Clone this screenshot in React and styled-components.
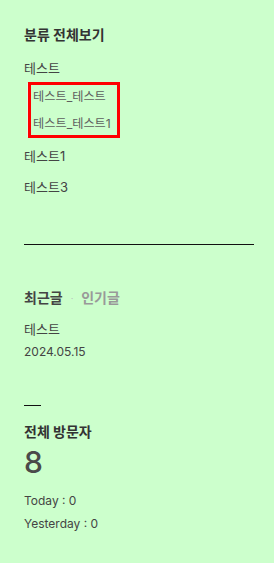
import React from "react";
import styled, { createGlobalStyle } from "styled-components";

const GlobalStyle = createGlobalStyle`
  html, body {
    margin: 0;
    padding: 0;
    background: #ccffcc;
  }
  body {
    font-family: Inter, "Noto Sans CJK KR", sans-serif;
    color: #333;
  }
  ul {
    margin: 0;
    padding: 0;
    list-style: none;
  }
`;

const Sidebar = styled.aside`
  padding: 25px 20px 30px 24px;
`;

const Heading = styled.h3`
  margin: 0;
  font-size: 14px;
  font-weight: 700;
  line-height: 20px;
  color: #333;
`;

const CategoryList = styled.ul`
  margin-top: 13px !important;
`;

const Item = styled.li`
  font-size: 13px;
  line-height: 20px;
  color: #444;
  margin-top: ${(p) => p.$gap || 0}px;
`;

const SubBox = styled.ul`
  width: 84px;
  margin: 4px 0 8px 4px !important;
  padding: 2px 0 1px 2px !important;
  border: 3px solid #ff0000;
  box-shadow: -2px 0 0 -1px #e6f5e6;
`;

const SubItem = styled.li`
  font-size: 12.2px;
  line-height: 20px;
  color: #5e5e5e;
  white-space: nowrap;
  & + & {
    margin-top: 7px;
  }
`;

const Divider = styled.hr`
  margin: ${(p) => p.$top}px 0 0;
  border: none;
  height: 1px;
  width: ${(p) => p.$width || "100%"};
  background: #111;
`;

const Tabs = styled.div`
  display: flex;
  align-items: center;
  margin-top: 43px;
  gap: 8px;
`;

const Tab = styled.span`
  font-size: 14px;
  font-weight: 700;
  line-height: 20px;
  color: ${(p) => (p.$active ? "#444" : "#999")};
`;

const Dot = styled.span`
  font-size: 9px;
  color: #bbb;
`;

const PostTitle = styled.div`
  margin-top: 11px;
  font-size: 13px;
  line-height: 20px;
  color: #444;
`;

const PostDate = styled.div`
  margin-top: 4px;
  font-size: 12px;
  line-height: 18px;
  color: #444;
`;

const VisitorHeading = styled(Heading)`
  margin-top: 16px;
`;

const Total = styled.div`
  margin-top: 2px;
  font-size: 30px;
  font-weight: 500;
  line-height: 36px;
  color: #4a4a4a;
`;

const Count = styled.div`
  margin-top: ${(p) => p.$gap}px;
  font-size: 12px;
  line-height: 20px;
  color: #444;
`;

export default function App() {
  return (
    <>
      <GlobalStyle />
      <Sidebar>
        <Heading>분류 전체보기</Heading>
        <CategoryList>
          <Item>
            테스트
            <SubBox>
              <SubItem>테스트_테스트</SubItem>
              <SubItem>테스트_테스트1</SubItem>
            </SubBox>
          </Item>
          <Item>테스트1</Item>
          <Item $gap={11}>테스트3</Item>
        </CategoryList>

        <Divider $top={47} />

        <Tabs>
          <Tab $active>최근글</Tab>
          <Dot>·</Dot>
          <Tab>인기글</Tab>
        </Tabs>
        <PostTitle>테스트</PostTitle>
        <PostDate>2024.05.15</PostDate>

        <Divider $top={44} $width="17px" />

        <VisitorHeading>전체 방문자</VisitorHeading>
        <Total>8</Total>
        <Count $gap={11}>Today : 0</Count>
        <Count $gap={3}>Yesterday : 0</Count>
      </Sidebar>
    </>
  );
}
